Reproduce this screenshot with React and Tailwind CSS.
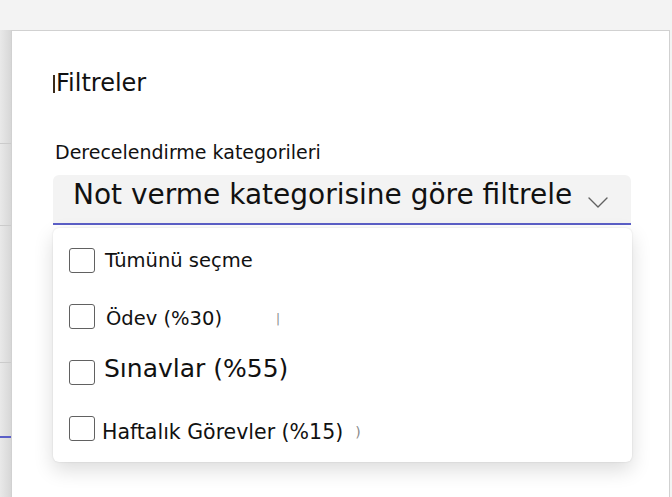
import React from "react";

const font = { fontFamily: '"DejaVu Sans", "Liberation Sans", sans-serif' };

const Checkbox = () => (
  <div className="w-[26px] h-[25px] shrink-0 rounded-[3px] border border-[#616161] bg-white"></div>
);

const Option = ({ label, textClass, stray, strayClass }) => (
  <div className="h-[56px] flex items-center">
    <Checkbox />
    <span className={`text-[#111] whitespace-nowrap ${textClass}`}>{label}</span>
    {stray && <span className={`text-[#8a8a8a] ${strayClass}`}>{stray}</span>}
  </div>
);

const LeftStrip = () => (
  <div className="w-[11px] shrink-0 flex flex-col bg-gradient-to-r from-[#e9e9e9] to-[#d7d7d7]">
    <div className="h-[113px]"></div>
    <div className="h-px bg-[#cbcbcb]"></div>
    <div className="h-[81px]"></div>
    <div className="h-px bg-[#cbcbcb]"></div>
    <div className="h-[136px]"></div>
    <div className="h-px bg-[#cbcbcb]"></div>
    <div className="h-[73px]"></div>
    <div className="h-[2px] bg-[#5b5fc7]"></div>
  </div>
);

export default function App() {
  return (
    <div className="w-[672px] h-[497px] bg-[#f3f3f3] flex flex-col overflow-hidden" style={font}>
      <div className="h-[30px] shrink-0"></div>
      <div className="flex-1 flex min-h-0">
        <LeftStrip />
        <div className="flex-1 mr-[2px] bg-white border-l border-t border-r border-[#d1d1d1] pt-[36px] pl-[41px] pr-[38px]">
          <div className="h-[32px] flex items-center text-[24px] leading-[32px] text-[#111]">
            <span className="w-[2px] h-[18px] bg-[#3a2a1a] mr-[1px] mt-[2px]"></span>
            <span>Filtreler</span>
          </div>

          <div className="mt-[41px] h-[24px] text-[19px] leading-[24px] text-[#111] pl-[2px]">
            Derecelendirme kategorileri
          </div>

          <div className="mt-[11px] h-[50px] flex items-start pl-[20px] pr-[23px] pt-[4px] bg-[#f3f3f3] rounded-t-[6px] border-b-2 border-[#5b5fc7]">
            <span className="flex-1 text-[28px] leading-[32px] text-[#111] whitespace-nowrap">
              Not verme kategorisine göre filtrele
            </span>
            <svg className="mt-[18px] shrink-0" width="20" height="11" viewBox="0 0 20 11" fill="none">
              <path d="M1 1 L10 10 L19 1" stroke="#616161" strokeWidth="1.4" strokeLinecap="round" strokeLinejoin="round" />
            </svg>
          </div>

          <div className="mt-[3px] mr-[-1px] pt-[4px] pb-[6px] px-[16px] bg-white rounded-[6px] shadow-[0_8px_20px_rgba(0,0,0,0.14),0_0_2px_rgba(0,0,0,0.12)]">
            <Option label="Tümünü seçme" textClass="text-[19.5px] leading-[24px] ml-[10px] mt-[2px]" />
            <Option
              label="Ödev (%30)"
              textClass="text-[19.5px] leading-[24px] ml-[11px] mt-[6px]"
              stray="|"
              strayClass="text-[12px] ml-[54px] mt-[6px]"
            />
            <Option label="Sınavlar (%55)" textClass="text-[25px] leading-[30px] ml-[9px] mb-[6px]" />
            <Option
              label="Haftalık Görevler (%15)"
              textClass="text-[20.5px] leading-[24px] ml-[7px] mt-[8px]"
              stray=")"
              strayClass="text-[14px] ml-[12px] mt-[8px]"
            />
          </div>
        </div>
      </div>
    </div>
  );
}
